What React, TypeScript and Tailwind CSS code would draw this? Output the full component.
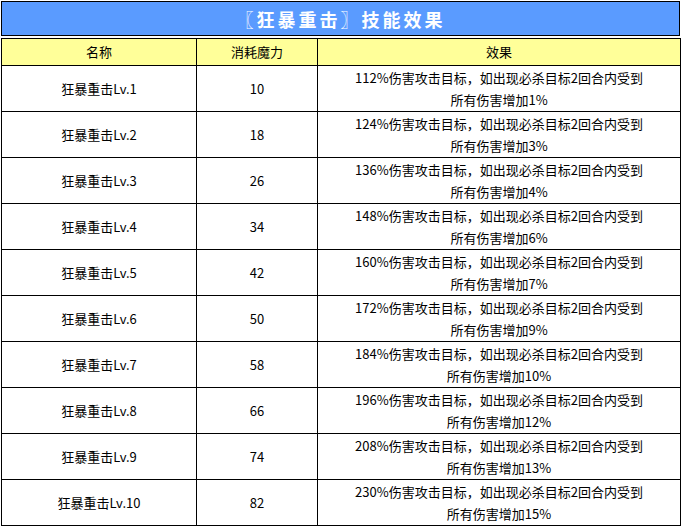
const rows = [
  { lv: 1, mp: 10, pct: 112, inc: 1 },
  { lv: 2, mp: 18, pct: 124, inc: 3 },
  { lv: 3, mp: 26, pct: 136, inc: 4 },
  { lv: 4, mp: 34, pct: 148, inc: 6 },
  { lv: 5, mp: 42, pct: 160, inc: 7 },
  { lv: 6, mp: 50, pct: 172, inc: 9 },
  { lv: 7, mp: 58, pct: 184, inc: 10 },
  { lv: 8, mp: 66, pct: 196, inc: 12 },
  { lv: 9, mp: 74, pct: 208, inc: 13 },
  { lv: 10, mp: 82, pct: 230, inc: 15 },
];

export default function App() {
  return (
    <div
      className="w-[681px] h-[527px] bg-white p-[1px] text-[13px] text-black overflow-hidden"
      style={{ fontFamily: '"Microsoft YaHei", "Noto Sans CJK SC", sans-serif' }}
    >
      {/* Title bar */}
      <div className="h-[35px] border border-black bg-[#5a9bff] flex items-center justify-center">
        <span className="text-white font-bold text-[18px] tracking-[3px] leading-none">
          〖狂暴重击〗技能效果
        </span>
      </div>

      <table className="mt-[2px] w-[679px] border-collapse table-fixed">
        <colgroup>
          <col className="w-[195px]" />
          <col className="w-[121px]" />
          <col className="w-[363px]" />
        </colgroup>
        <thead>
          <tr className="h-[27px] bg-[#ffff99]">
            <th className="border border-black font-normal p-0">名称</th>
            <th className="border border-black font-normal p-0">消耗魔力</th>
            <th className="border border-black font-normal p-0">效果</th>
          </tr>
        </thead>
        <tbody>
          {rows.map((r) => (
            <tr key={r.lv} className="h-[46px]">
              <td className="border border-black text-center p-0">狂暴重击Lv.{r.lv}</td>
              <td className="border border-black text-center p-0">{r.mp}</td>
              <td className="border border-black text-center p-0 leading-[22px]">
                <div>{r.pct}%伤害攻击目标，如出现必杀目标2回合内受到</div>
                <div>所有伤害增加{r.inc}%</div>
              </td>
            </tr>
          ))}
        </tbody>
      </table>
    </div>
  );
}
